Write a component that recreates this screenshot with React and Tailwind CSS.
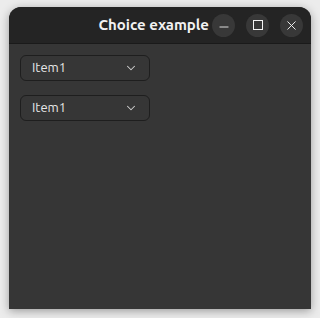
import { Minus, X, ChevronDown } from "lucide-react";

function Choice() {
  return (
    <div className="flex h-[26px] w-[130px] items-center justify-between rounded-[6px] border border-[#1e1e1e] bg-[#363636] pl-[11px] pr-[11px]">
      <span className="text-[13px] text-[#e8e8e8]">Item1</span>
      <ChevronDown size={14} strokeWidth={1.8} className="text-[#d0d0d0]" />
    </div>
  );
}

function WinButton({ children }) {
  return (
    <div className="flex h-[23px] w-[23px] items-center justify-center rounded-full bg-[#383838] text-[#f4f4f4]">
      {children}
    </div>
  );
}

export default function App() {
  return (
    <div
      className="h-[318px] w-[320px] overflow-hidden bg-[#ececec] pl-[9px] pt-[7px]"
      style={{ fontFamily: "Ubuntu, 'Noto Sans', 'DejaVu Sans', sans-serif" }}
    >
      <div className="flex h-[302px] w-[302px] flex-col overflow-hidden rounded-t-[12px] bg-[#363636] shadow-[0_2px_10px_rgba(0,0,0,0.35)]">
        <div className="flex h-[37px] items-center border-b border-[#1a1a1a] bg-[#242424] pr-[8px]">
          <div className="flex-1" />
          <span className="mr-[3px] text-[15px] font-bold text-[#f2f2f2]">Choice example</span>
          <div className="flex items-center gap-[11px]">
            <WinButton>
              <Minus size={14} strokeWidth={1.5} className="translate-y-[2px]" />
            </WinButton>
            <WinButton>
              <div className="h-[10px] w-[10px] border-[1.5px] border-[#f4f4f4]" />
            </WinButton>
            <WinButton>
              <X size={15} strokeWidth={1.5} />
            </WinButton>
          </div>
        </div>
        <div className="flex flex-col gap-[14px] pl-[11px] pt-[11px]">
          <Choice />
          <Choice />
        </div>
      </div>
    </div>
  );
}
